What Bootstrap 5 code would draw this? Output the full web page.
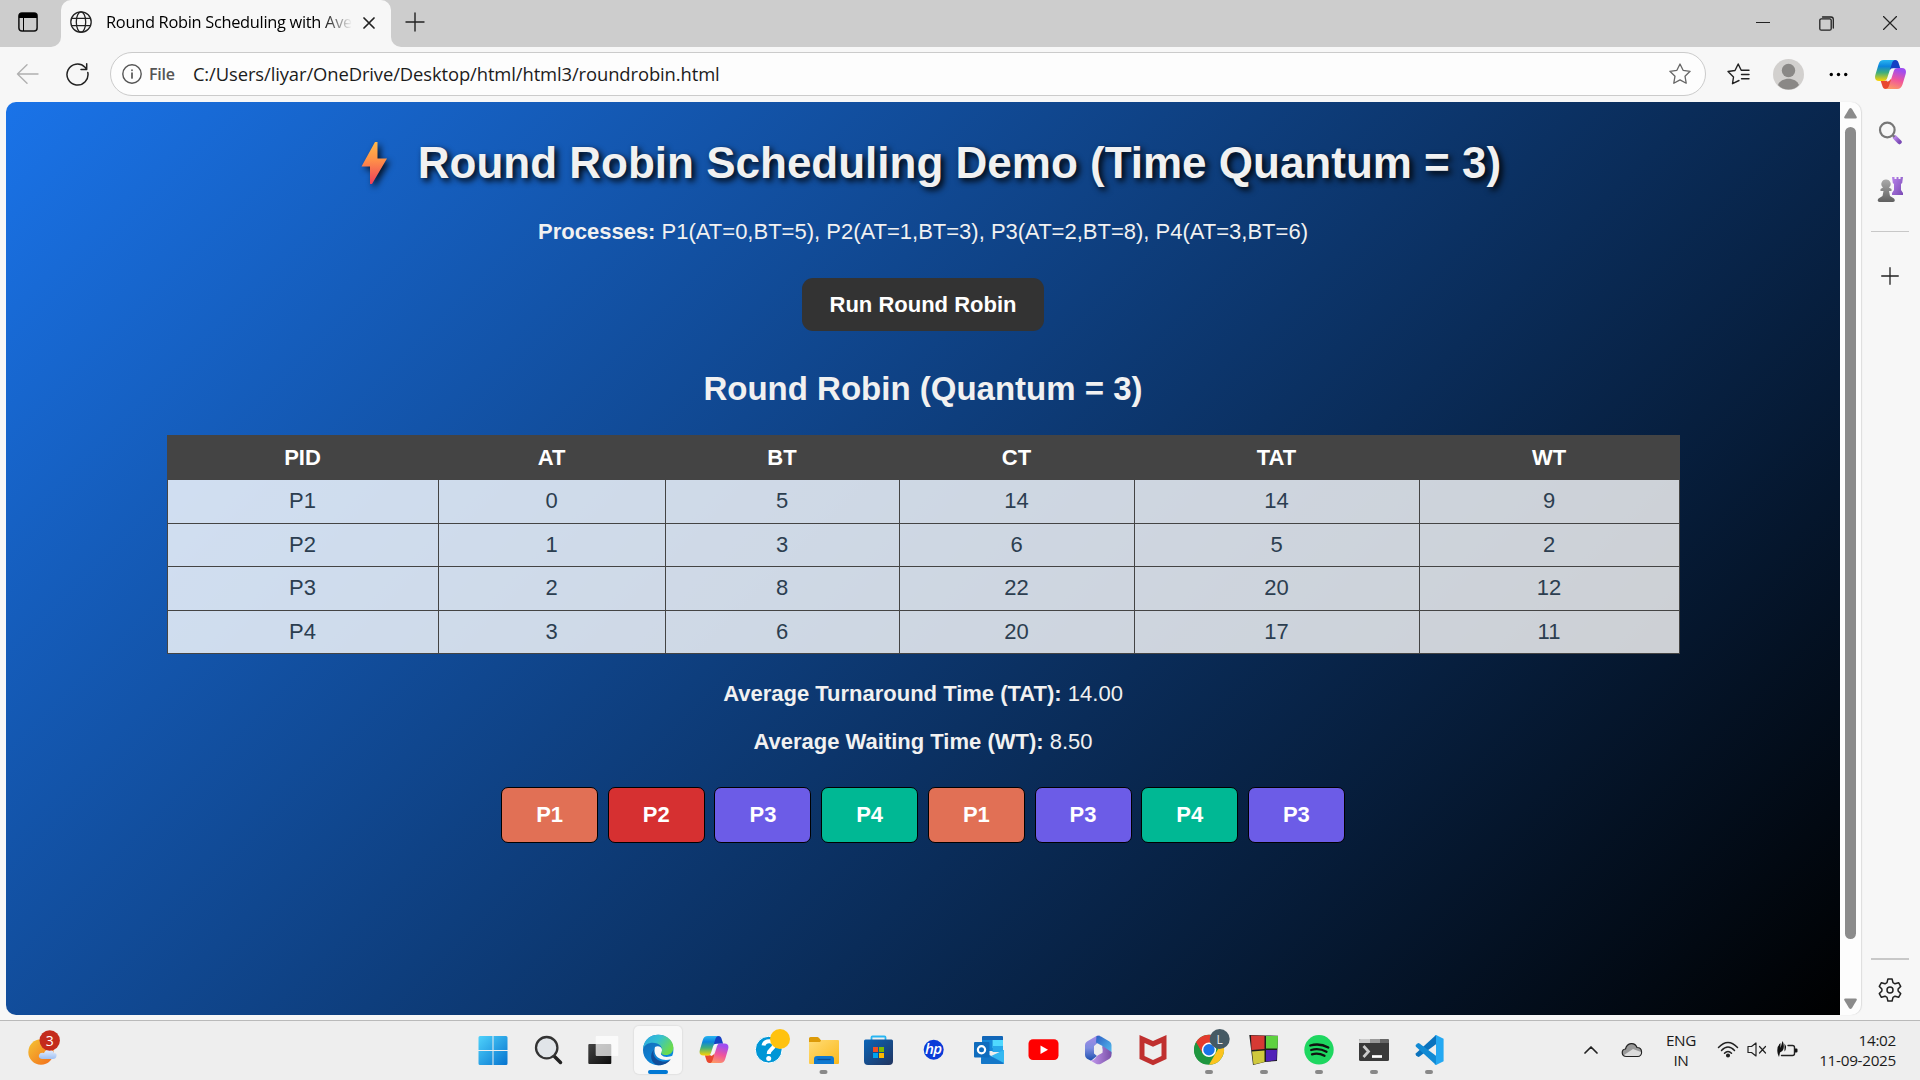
<!DOCTYPE html>
<html lang="en">
<head>
<meta charset="utf-8">
<title>Round Robin Scheduling with Average</title>
<link rel="stylesheet" href="https://cdn.jsdelivr.net/npm/bootstrap@5.3.0/dist/css/bootstrap.min.css">
<script src="https://cdn.jsdelivr.net/npm/bootstrap@5.3.0/dist/js/bootstrap.bundle.min.js"></script>
<style>
body{width:1920px;height:1080px;overflow:hidden;background:#f7f7f7;font-family:"Open Sans","Noto Sans",sans-serif;color:#1b1b1b}
svg{display:block;flex:none}
.ln{fill:none;stroke:#222;stroke-linecap:round;stroke-linejoin:round}
.tabstrip{height:47px;background:#cdcdcd}
.strip-l{width:61px;border-bottom-right-radius:10px;background:#cdcdcd;padding:0 0 3px 18px}
.strip-r{border-bottom-left-radius:10px;background:#cdcdcd;padding:0 0 4px 14px}
.strip-bg{background:#f7f7f7}
.tab-active{width:330px;background:#f7f7f7;border-radius:10px 10px 0 0;padding:0 0 3px 9px}
.tab-title{width:246px;margin-left:14px;font-size:16.4px;letter-spacing:-.3px;white-space:nowrap;color:#000;-webkit-mask-image:linear-gradient(90deg,#000 88%,transparent)}
.toolbar{height:55px;padding:0 0 1px 16px}
.omni{width:1596px;height:44px;margin-left:21px;border:1px solid #cbcbcb;border-radius:22px;background:#fdfdfd;padding:0 14px 0 11px}
.omni-kind{font-size:16px;font-weight:600;color:#555;margin-left:7px;letter-spacing:-.2px}
.omni-url{font-size:18.4px;margin-left:18px;letter-spacing:-.1px}
.middle{height:913px;padding-left:6px}
.page-view{width:1834px;border-radius:10px 0 0 10px;background:linear-gradient(135deg,#1a73e8,#000);font-family:Arial,"Liberation Sans",sans-serif;font-size:22px;color:#f1f1f1;line-height:26px}
.page-view h1{font-size:44px;font-weight:700;line-height:50px;padding:36px 0 0 16px;margin:0;text-shadow:3px 3px 6px #000;color:#f1f1f1;height:117px}
.bolt{margin:4px 31px 0 0;filter:drop-shadow(3px 3px 3px rgba(0,0,0,.8))}
.run-btn{width:242px;height:53px;margin-top:33px;border:0;border-radius:11px;background:#333;color:#fff;font-size:22px;font-weight:700;line-height:26px;padding:0}
.page-view h2{font-size:33px;font-weight:700;line-height:38px;margin:39px 0 27px;color:#f1f1f1}
.rr-table{width:1512px;table-layout:fixed;border-collapse:collapse;color:#2c3e50}
.rr-table td,.rr-table th{border:1px solid #444;text-align:center;padding:0;height:43.5px}
.rr-table td{background:rgba(255,255,255,.8)}
.rr-table th{background:#444;color:#fff;height:44px}
.avg{margin:0 0 22px}
.slots{gap:9.700px;margin-top:10px}
.slot{width:97px;height:56px;border:1px solid #000;border-radius:7px;color:#fff;font-weight:700}
.k1{background:#e17055}.k2{background:#d63031}.k3{background:#6c5ce7}.k4{background:#00b894}
.scroll-rail{width:21px;background:#fdfdfd;border-radius:0 10px 10px 0;box-shadow:1px 0 1px #ddd;padding:6px 5px 6px 5px}
.thumb{width:11px;height:812px;background:#8b8b8b;border-radius:6px;margin-top:8px}
.side-rail{width:59px;padding-right:2px}
.rule{width:38px;height:1px;background:#c8c8c8}
.taskbar{height:60px;margin-top:5px;background:#eee;border-top:1px solid #b9b9b9;padding-bottom:2px}
.weather{width:465px;padding:0 0 3px 27px}
.app-cell{width:55.08px}
.app-on{background:#f8f8f8;border-radius:5px;box-shadow:0 0 1px 1px #e2e2e2}
.tray{font-size:15.3px;line-height:20px;letter-spacing:-.3px}
</style>
</head>
<body>
<svg width="0" height="0" class="position-absolute">
<defs>
<linearGradient id="win" x1="0" y1="0" x2="1" y2="1"><stop stop-color="#4fd2fb"/><stop offset="1" stop-color="#0573cf"/></linearGradient>
<linearGradient id="cpA" x1="0" y1="0" x2="0" y2="1"><stop stop-color="#29b6f0"/><stop offset=".3" stop-color="#0b84dd"/><stop offset=".6" stop-color="#3fae7d"/><stop offset="1" stop-color="#ffd400"/></linearGradient>
<linearGradient id="cpB" x1=".3" y1="0" x2="0" y2="1"><stop stop-color="#a04df0"/><stop offset=".45" stop-color="#f0559c"/><stop offset="1" stop-color="#ffa45c"/></linearGradient>
<linearGradient id="boltG" x1="0" y1="0" x2="0" y2="1"><stop stop-color="#ffb84a"/><stop offset=".4" stop-color="#ff9448"/><stop offset="1" stop-color="#ee3f5a"/></linearGradient>
<linearGradient id="edA" x1="0" y1="0" x2="1" y2=".5"><stop stop-color="#2ba5e6"/><stop offset=".5" stop-color="#35c1d0"/><stop offset="1" stop-color="#6cdb4d"/></linearGradient>
<linearGradient id="edB" x1="0" y1="0" x2=".6" y2="1"><stop stop-color="#1667b0"/><stop offset="1" stop-color="#0a8ce2"/></linearGradient>
<linearGradient id="fold" x1="0" y1="0" x2="1" y2="1"><stop stop-color="#ffdc76"/><stop offset="1" stop-color="#fbb91c"/></linearGradient>
<linearGradient id="store" x1="0" y1="0" x2="1" y2="1"><stop stop-color="#0b65b8"/><stop offset="1" stop-color="#21345f"/></linearGradient>
<linearGradient id="dark" x1="0" y1="0" x2="1" y2="1"><stop stop-color="#444"/><stop offset="1" stop-color="#0d0d0d"/></linearGradient>
<linearGradient id="pur" x1="0" y1="0" x2="1" y2="1"><stop stop-color="#b783ea"/><stop offset="1" stop-color="#7b4bb5"/></linearGradient>
<linearGradient id="gry" x1="0" y1="0" x2="0" y2="1"><stop stop-color="#aaa"/><stop offset="1" stop-color="#606060"/></linearGradient>
<linearGradient id="sun" x1="0" y1="0" x2="1" y2="1"><stop stop-color="#f4c534"/><stop offset="1" stop-color="#f36a1a"/></linearGradient>
<linearGradient id="cld" x1="0" y1="0" x2="0" y2="1"><stop stop-color="#e8f1ff"/><stop offset="1" stop-color="#9fc0f2"/></linearGradient>
<linearGradient id="mA" x1="0" y1="0" x2="0" y2="1"><stop stop-color="#a78ae6"/><stop offset=".5" stop-color="#7d8ce0"/><stop offset="1" stop-color="#1b4fae"/></linearGradient>
<linearGradient id="mB" x1="0" y1="0" x2="1" y2="1"><stop stop-color="#2d5fc4"/><stop offset="1" stop-color="#55c0f0"/></linearGradient>
<linearGradient id="mC" x1="0" y1="0" x2="1" y2="0"><stop stop-color="#c59bf0"/><stop offset="1" stop-color="#7a50a8"/></linearGradient>
<symbol id="copilot" viewBox="0 0 30 28">
<path d="M14 0h5.500c2.300 0 3 1.500 3.600 3.600L24.500 8H18c-2 0-3 .8-3.500 2z" fill="#1440c4"/>
<path d="M16 28h-5.500c-2.300 0-3-1.500-3.600-3.600L5.500 20H12c2 0 3-.8 3.500-2z" fill="#e8482e"/>
<path d="M8.500 0H20c-2.200 0-3 1.300-3.700 3.500L12 17c-.9 2.700-1.800 3.300-4.300 3.300H4C.4 20.300-.6 17.700.4 14.300L3.300 4.500C4.300 1.300 5.600 0 8.500 0z" fill="url(#cpA)"/>
<path d="M21.500 28H10c2.200 0 3-1.300 3.700-3.500L18 11c.9-2.700 1.800-3.300 4.300-3.300H26c3.600 0 4.600 2.600 3.600 6l-2.900 9.800c-1 3.200-2.300 4.500-5.200 4.500z" fill="url(#cpB)"/>
<path d="M15.500 8.500h3.300c-1.500.5-1.900 1.300-2.300 2.700L14 19.500c-.4.800-1 1.200-2.500 1.200z" fill="#f7f7f7"/>
</symbol>
</defs>
</svg>

<div class="tabstrip d-flex">
  <div class="strip-bg"><div class="strip-l h-100 d-flex align-items-center">
    <svg width="20" height="20" viewBox="0 0 20 20"><rect x=".9" y=".9" width="18.200" height="18.200" rx="3" fill="none" stroke="#111" stroke-width="1.500"/><path d="M1 6V3.500C1 2 2 1 3.500 1h13C18 1 19 2 19 3.500V6zM5 6h1v13H5z"/></svg>
  </div></div>
  <div class="tab-active d-flex align-items-center">
    <svg class="ln" width="22" height="22" viewBox="0 0 22 22" stroke-width="1.300"><circle cx="11" cy="11" r="10.200"/><ellipse cx="11" cy="11" rx="4.700" ry="10.200"/><path d="M1.500 7.300h19M1.500 14.700h19"/></svg>
    <div class="tab-title">Round Robin Scheduling with Ave</div>
    <svg class="ln" style="margin:2px 0 0 11px" width="12" height="12" viewBox="0 0 12 12" stroke-width="1.700"><path d="M1 1l10 10M11 1L1 11"/></svg>
  </div>
  <div class="strip-bg flex-grow-1"><div class="strip-r h-100 d-flex align-items-center">
    <svg class="ln" width="20" height="20" viewBox="0 0 20 20" stroke-width="1.400"><path d="M10 1v18M1 10h18"/></svg>
    <div class="d-flex align-items-center ms-auto" style="margin-right:23px;padding-top:3px">
      <svg class="ln" width="14" height="14" viewBox="0 0 14 14" stroke-width="1.200"><path d="M0 6.500h14"/></svg>
      <svg class="ln" style="margin-left:49px" width="15" height="15" viewBox="0 0 15 15" stroke-width="1.300"><rect x=".8" y="2.800" width="11.400" height="11.400" rx="1.500"/><path d="M3.500 1H12c1.500 0 2.300.8 2.300 2.300V12"/></svg>
      <svg class="ln" style="margin-left:49px" width="14" height="14" viewBox="0 0 14 14" stroke-width="1.200"><path d="M.5.500l13 13M13.500.500l-13 13"/></svg>
    </div>
  </div></div>
</div>

<div class="toolbar d-flex align-items-center">
  <svg class="ln" style="stroke:#b0b0b0" width="23" height="20" viewBox="0 0 23 20" stroke-width="1.400"><path d="M22 10H1.500M11 .800L1.500 10l9.500 9.200"/></svg>
  <svg class="ln" style="margin-left:27px" width="23" height="23" viewBox="0 0 23 23" stroke-width="1.500"><path d="M21.800 9.500A10.500 10.500 0 1 1 19 4.200L20.500 6M20.700 .800V6.500H15"/></svg>
  <div class="omni d-flex align-items-center">
    <svg class="ln" style="stroke:#555" width="20" height="20" viewBox="0 0 20 20" stroke-width="1.400"><circle cx="10" cy="10" r="9.200"/><path d="M10 9v5M10 6.200v.1" stroke-width="1.700"/></svg>
    <span class="omni-kind">File</span>
    <span class="omni-url">C:/Users/liyar/OneDrive/Desktop/html/html3/roundrobin.html</span>
    <svg class="ln ms-auto" style="stroke:#666" width="22" height="22" viewBox="0 0 22 22" stroke-width="1.300"><path d="M11 1l3.100 6.300 7 1-5.100 4.900 1.200 7L11 16.900l-6.200 3.300 1.200-7L.9 8.300l7-1z"/></svg>
  </div>
  <svg class="ln" style="margin-left:21px" width="23" height="22" viewBox="0 0 23 22" stroke-width="1.400"><path d="M12 17.500l-6.500 3.200L6.500 14 1 8.500l7-1L11.200 1l3 6.200H22M14.500 11.500H22M14.500 15.800H22"/></svg>
  <svg style="margin-left:23px" width="31" height="31" viewBox="0 0 31 31"><circle cx="15.500" cy="15.500" r="15.500" fill="#d2d0ce"/><circle cx="15.500" cy="11.500" r="6.700" fill="#8a8886"/><path d="M5 26c3-8.500 18-8.500 21 0-5 6-16 6-21 0z" fill="#8a8886"/></svg>
  <svg style="margin-left:25px" width="19" height="5" viewBox="0 0 19 5"><circle cx="2.300" cy="2.500" r="1.700"/><circle cx="9.500" cy="2.500" r="1.700"/><circle cx="16.700" cy="2.500" r="1.700"/></svg>
  <svg style="margin-left:27px" width="31" height="29"><use href="#copilot"/></svg>
</div>

<div class="middle d-flex">
  <main class="page-view text-center d-flex flex-column align-items-center">
    <h1 class="d-flex align-items-start justify-content-center">
      <svg class="bolt" width="26" height="42" viewBox="0 0 26 42"><path d="M14 0h2.500v16.500H26L11 42H9V24.500H.500z" fill="url(#boltG)"/></svg>
      <span>Round Robin Scheduling Demo (Time Quantum = 3)</span>
    </h1>
    <p class="m-0"><b>Processes:</b> P1(AT=0,BT=5), P2(AT=1,BT=3), P3(AT=2,BT=8), P4(AT=3,BT=6)</p>
    <button class="run-btn">Run Round Robin</button>
    <h2>Round Robin (Quantum = 3)</h2>
    <table class="rr-table">
      <colgroup><col style="width:271px"><col style="width:227px"><col style="width:234px"><col style="width:235px"><col style="width:285px"><col style="width:260px"></colgroup>
      <tr><th>PID</th><th>AT</th><th>BT</th><th>CT</th><th>TAT</th><th>WT</th></tr>
      <tr><td>P1</td><td>0</td><td>5</td><td>14</td><td>14</td><td>9</td></tr>
      <tr><td>P2</td><td>1</td><td>3</td><td>6</td><td>5</td><td>2</td></tr>
      <tr><td>P3</td><td>2</td><td>8</td><td>22</td><td>20</td><td>12</td></tr>
      <tr><td>P4</td><td>3</td><td>6</td><td>20</td><td>17</td><td>11</td></tr>
    </table>
    <p class="avg" style="margin-top:27px"><b>Average Turnaround Time (TAT):</b> 14.00</p>
    <p class="avg"><b>Average Waiting Time (WT):</b> 8.50</p>
    <div class="slots d-flex">
      <div class="slot k1 d-flex align-items-center justify-content-center">P1</div>
      <div class="slot k2 d-flex align-items-center justify-content-center">P2</div>
      <div class="slot k3 d-flex align-items-center justify-content-center">P3</div>
      <div class="slot k4 d-flex align-items-center justify-content-center">P4</div>
      <div class="slot k1 d-flex align-items-center justify-content-center">P1</div>
      <div class="slot k3 d-flex align-items-center justify-content-center">P3</div>
      <div class="slot k4 d-flex align-items-center justify-content-center">P4</div>
      <div class="slot k3 d-flex align-items-center justify-content-center">P3</div>
    </div>
  </main>
  <div class="scroll-rail d-flex flex-column align-items-center">
    <svg width="13" height="11" viewBox="0 0 13 11"><path d="M5 1Q6.500-.800 8 1l4.500 7.500q1 2-1 2h-10q-2 0-1-2z" fill="#8b8b8b"/></svg>
    <div class="thumb"></div>
    <svg class="mt-auto" width="13" height="11" viewBox="0 0 13 11"><path d="M5 10q1.500 1.800 3 0l4.500-7.500q1-2-1-2h-10q-2 0-1 2z" fill="#8b8b8b"/></svg>
  </div>
  <aside class="side-rail d-flex flex-column align-items-center">
    <svg style="margin-top:19px" width="24" height="24" viewBox="0 0 24 24"><circle cx="9.300" cy="9" r="7.300" fill="none" stroke="#777" stroke-width="2.200"/><path d="M17 16.500l4.500 4.500" stroke="url(#pur)" stroke-width="4.500" stroke-linecap="round"/><path d="M14.500 14l2 2" stroke="#777" stroke-width="2.200"/></svg>
    <svg style="margin-top:31px" width="26" height="26" viewBox="0 0 26 26"><path d="M15 1h2.500v2h2V1h2v2h2V1H26l-.8 6-1.200 1v6l2 3v2H15v-2l2-3V8l-1.200-1z" fill="url(#pur)"/><path d="M9 3.500a4.500 4.500 0 0 1 3 8l2.500 1.500v2H12l1 5 4 2.500q2 3-1 3.500H2.500q-3-.5-1-3.500l4-2.500 1-5H3.500v-2L6 11.500a4.500 4.500 0 0 1 3-8z" fill="url(#gry)"/></svg>
    <div class="rule" style="margin-top:29px"></div>
    <svg class="ln" style="margin-top:35px" width="18" height="18" viewBox="0 0 18 18" stroke-width="1.300"><path d="M9 .700v16.600M.700 9h16.600"/></svg>
    <div class="rule mt-auto" style="height:2px"></div>
    <svg class="ln" style="margin:18px 0 13px" width="24" height="24" viewBox="0 0 24 24" stroke-width="1.500"><circle cx="12" cy="12" r="3"/><path d="M9.900 1h4.200l.9 3.600 2 1.200 3.600-1.100 2.100 3.700-2.600 2.600v2l2.600 2.600-2.100 3.700-3.600-1.100-2 1.200-.9 3.600H9.900L9 19.400l-2-1.200-3.600 1.100-2.100-3.700L3.900 13v-2L1.300 8.400l2.100-3.700L7 5.800l2-1.200z"/></svg>
  </aside>
</div>

<footer class="taskbar d-flex align-items-center">
  <div class="weather">
    <svg width="36" height="36" viewBox="0 0 36 36"><circle cx="14" cy="22" r="12.700" fill="url(#sun)"/><path d="M15 29q-4-1-3-4 1-3 5-2 2-5 7-3 3 1 3 3 3 0 2.500 3T26 29z" fill="url(#cld)"/><circle cx="22.700" cy="10.500" r="10.200" fill="#c42b1c"/><text x="22.700" y="15.500" text-anchor="middle" font-size="14" fill="#fff">3</text></svg>
  </div>
  <div class="d-flex">
    <div class="app-cell d-flex justify-content-center"><svg width="48" height="48" viewBox="0 0 48 48"><path d="M11 10h12.500v14H9.500V11.500Q9.500 10 11 10zM24.500 10H37q1.500 0 1.500 1.500V24h-14zM9.500 25h14v14H11q-1.500 0-1.500-1.500zM24.500 25h14v12.500q0 1.500-1.500 1.500H24.500z" fill="url(#win)"/></svg></div>
    <div class="app-cell d-flex justify-content-center"><svg width="48" height="48" viewBox="0 0 48 48"><path d="M30.500 30.500l6 6" stroke="#222" stroke-width="3.500" stroke-linecap="round"/><circle cx="22.700" cy="21.700" r="10.700" fill="#e1e5e9" stroke="#333" stroke-width="2.300"/></svg></div>
    <div class="app-cell d-flex justify-content-center"><svg width="48" height="48" viewBox="0 0 48 48"><rect x="9.300" y="18" width="23" height="20" rx="1" fill="url(#dark)"/><rect x="16.700" y="10" width="22.600" height="20" rx="1" fill="#fff" opacity=".72"/></svg></div>
    <div class="app-cell d-flex justify-content-center"><svg class="app-on" width="48" height="48" viewBox="0 0 48 48"><circle cx="24.200" cy="24" r="15.200" fill="url(#edB)"/><path d="M9 23C10 13 17 8.800 24.200 8.800c9 0 15.200 6.200 15.200 12.700 0 5-3.500 7.500-7.500 7.500-3.500 0-5.700-1.500-4.700-3 2-3 0-7-4-8.500C18 15.500 11 17 9 23z" fill="url(#edA)"/><path d="M20.500 23c-3 4 0 11.500 8 12.500 3 .3 6-.5 8.500-2.500-3 4.500-8 6.500-13 6.200-7-1-9.500-11-3.500-16.200z" fill="#124d98"/><path d="M21 21c3-2 7 0 7 3 0 2-2 3.500-.5 5 2 2.500 7 2.500 12 .5v2.500L37 33c-6 2.500-14 0-15.800-5-1-3-.7-5-.2-7z" fill="#f8f8f8"/><rect x="14" y="44" width="20" height="4" rx="2" fill="#0078d4"/></svg></div>
    <div class="app-cell d-flex justify-content-center"><svg width="48" height="48" viewBox="0 0 48 48"><use href="#copilot" x="10" y="10" width="30" height="27"/></svg></div>
    <div class="app-cell d-flex justify-content-center"><svg width="48" height="48" viewBox="0 0 48 48"><circle cx="24.700" cy="23.700" r="13.400" fill="#0096d6" stroke="#fff" stroke-width="1"/><path d="M19.500 19.500c1-6 11-5.500 10.500 0-.3 3.500-5.300 4-5.300 8.500" fill="none" stroke="#fff" stroke-width="4"/><circle cx="24.700" cy="32.500" r="2.500" fill="#fff"/><circle cx="36" cy="13" r="10" fill="#ffc20e"/></svg></div>
    <div class="app-cell d-flex justify-content-center"><svg width="48" height="48" viewBox="0 0 48 48"><path d="M10 12.500Q10 11 11.500 11h7q1 0 2 1.500l2 2.500v4H10z" fill="#dc9a08"/><path d="M10 16h11l1.500-2H39q1 0 1 1v22q0 1-1 1H11q-1 0-1-1z" fill="url(#fold)"/><path d="M15 38v-5q0-3 3-3h14q3 0 3 3v5z" fill="#0f78d0"/><path d="M18.500 33.500h13" stroke="#0a4f96" stroke-width="1.300"/><rect x="20.500" y="44" width="8" height="4" rx="2" fill="#888"/></svg></div>
    <div class="app-cell d-flex justify-content-center"><svg width="48" height="48" viewBox="0 0 48 48"><path d="M17.500 15v-3.500q0-1 1-1h12q1 0 1 1V15" fill="none" stroke="#27b5f2" stroke-width="1.800"/><path d="M10 15q0-1.500 1.500-1.500h26q1.500 0 1.500 1.500v20q0 4-4 4H14q-4 0-4-4z" fill="url(#store)"/><path d="M19 21h5v5h-5z" fill="#f25022"/><path d="M25 21h5v5h-5z" fill="#7fba00"/><path d="M19 27h5v5h-5z" fill="#00a4ef"/><path d="M25 27h5v5h-5z" fill="#ffb900"/></svg></div>
    <div class="app-cell d-flex justify-content-center"><svg width="48" height="48" viewBox="0 0 48 48"><circle cx="24.700" cy="23.700" r="10" fill="#0a3bd8"/><text x="24.300" y="28" text-anchor="middle" font-size="15" font-style="italic" font-weight="600" letter-spacing="-.6" fill="#fff">hp</text></svg></div>
    <div class="app-cell d-flex justify-content-center"><svg width="48" height="48" viewBox="0 0 48 48"><path d="M18 11q0-1 1-1h19q1 0 1 1v14H18z" fill="#1066b8"/><path d="M18 14h10.500v11H18z" fill="#1588da"/><path d="M28.500 14H39v8H28.500z" fill="#50d9ff"/><path d="M28.500 20H39v6H28.500z" fill="#28a8ea"/><path d="M17 24l12 7 11-7v12.500q0 1.500-1.500 1.500h-20q-1.500 0-1.500-1.500z" fill="#1b88d8"/><path d="M40 24v13L27 30z" fill="#35b8f1"/><path d="M40 37.500L24 29l-7 4v4q0 1 1.500 1H39z" fill="#1477c8"/><rect x="10" y="16" width="15.500" height="15.500" rx="1" fill="#0f6cbd"/><circle cx="17.500" cy="23.700" r="3.600" fill="none" stroke="#fff" stroke-width="2.200"/></svg></div>
    <div class="app-cell d-flex justify-content-center"><svg width="48" height="48" viewBox="0 0 48 48"><rect x="9.500" y="13.300" width="30" height="20.700" rx="4.500" fill="#f00"/><path d="M21.500 19.500v8.600l7.500-4.300z" fill="#fff"/></svg></div>
    <div class="app-cell d-flex justify-content-center"><svg width="48" height="48" viewBox="0 0 48 48"><path d="M21.500 10.500L13 15.500q-2 1.200-2 3.500v10q0 2.500 2 3.700l4 2 6-4.700-3-2.500V20l6-5V9.500q-2-.5-4.500 1z" fill="url(#mA)"/><path d="M22.500 10q2-.8 4.500.5l8.500 5q2 1.200 2 3.500v9l-9-4v-4l-6.500-3.500z" fill="url(#mB)"/><path d="M37.500 26v3q0 2.500-2 3.700l-8.500 5q-2.500 1.300-5 0l-6-3.500c5 1 6-4 8-5l4.500-2.500V20z" fill="url(#mC)"/><circle cx="24.200" cy="23.700" r="4.300" fill="#eee"/></svg></div>
    <div class="app-cell d-flex justify-content-center"><svg width="48" height="48" viewBox="0 0 48 48"><path d="M10.500 9L24 15l13.500-6v24L24 39.200 10.500 33zm5 8v13l8.500 4 8.500-4V17L24 20.700z" fill="#c0302f" fill-rule="evenodd"/></svg></div>
    <div class="app-cell d-flex justify-content-center"><svg width="48" height="48" viewBox="0 0 48 48"><circle cx="24" cy="23.800" r="15" fill="#1e963f"/><path d="M11 16.300A15 15 0 0 1 37 16.300H24v15z" fill="#e33b2e"/><path d="M37 16.300a15 15 0 0 1-13 22.500l6.500-11.300z" fill="#fcc31e"/><path d="M11 16.300l6.500 11.200L24 23.800l1-7.500z" fill="#e33b2e"/><path d="M11 16.300l6.500 11.200q3 4 6.500 3.800L20 38.300A15 15 0 0 1 11 16.300z" fill="#1e963f"/><circle cx="24" cy="23.800" r="7.200" fill="#fff"/><circle cx="24" cy="23.800" r="5.700" fill="#1a73e8"/><circle cx="34.700" cy="13" r="10" fill="#455a64"/><text x="34.700" y="17.500" text-anchor="middle" font-size="12" fill="#e4e8ea">L</text><rect x="20" y="44" width="8" height="4" rx="2" fill="#888"/></svg></div>
    <div class="app-cell d-flex justify-content-center"><svg width="48" height="48" viewBox="0 0 48 48"><path d="M9.300 9L25 9.500 38 9.700 37 35l-12 1-12 3z" fill="#1c1c1c"/><path d="M11 9.500l13.500.3V23L11.500 24z" fill="#d63a34"/><path d="M26 10h12l-.5 12.500H26z" fill="#5ed13f"/><path d="M12 25.500l12.500-1V36L13.500 38.500z" fill="#cfc83d"/><path d="M26 24h11l-.5 10L26 35.500z" fill="#5121b8"/><rect x="20" y="44" width="8" height="4" rx="2" fill="#888"/></svg></div>
    <div class="app-cell d-flex justify-content-center"><svg width="48" height="48" viewBox="0 0 48 48"><circle cx="24" cy="23.800" r="14.700" fill="#1ed760"/><path d="M15.300 19.500q9.500-2.700 18 2M16.200 24q8-2.200 15.300 1.800M17 28.300q6.500-1.700 12.500 1.500" fill="none" stroke="#111" stroke-width="2.300" stroke-linecap="round"/><rect x="20" y="44" width="8" height="4" rx="2" fill="#888"/></svg></div>
    <div class="app-cell d-flex justify-content-center"><svg width="48" height="48" viewBox="0 0 48 48"><rect x="9" y="13" width="30" height="22" rx="1.500" fill="#3a3a3a"/><path d="M9 17v-2.500Q9 13 10.500 13H20v4z" fill="#ccc"/><path d="M20 13h10v4H20z" fill="#999"/><path d="M30 13h7.500q1.500 0 1.500 1.500V17h-9z" fill="#666"/><path d="M13.500 20l5 5.500-5 5.500" fill="none" stroke="#ccc" stroke-width="2.700"/><path d="M22 30.500h10" stroke="#fff" stroke-width="2.700"/><rect x="20" y="44" width="8" height="4" rx="2" fill="#888"/></svg></div>
    <div class="app-cell d-flex justify-content-center"><svg width="48" height="48" viewBox="0 0 48 48"><path d="M31 9l-20 18.300q-1 1 0 2l1.500 1.300q1 .7 2 0L34 16z" fill="#0a72bd"/><path d="M31 39L11 20.700q-1-1 0-2l1.500-1.300q1-.7 2 0L34 32z" fill="#118ad4"/><path d="M31 9l7.600 3.700v22.600L31 39q-1 .3-1.500-.5 1.500.5 1.500-1.500V11q0-2-1.500-1.500Q30 8.700 31 9z" fill="#24a8f2"/><rect x="20" y="44" width="8" height="4" rx="2" fill="#888"/></svg></div>
  </div>
  <div class="tray d-flex align-items-center ms-auto" style="margin-right:24px">
    <svg class="ln" width="14" height="8" viewBox="0 0 14 8" stroke-width="1.700"><path d="M1 7l6-6 6 6"/></svg>
    <svg style="margin-left:23px" width="22" height="16" viewBox="0 0 22 16"><path d="M5.500 14.500C0 14.500 0 7.500 4.500 7 6 0 14 0 16 5.500c6 0 6 9 .5 9z" fill="#999" stroke="#222" stroke-width="1.200"/><path d="M3 13l9-6 8 3q0 4-4 4H5z" fill="#dcdcdc"/></svg>
    <div class="text-center" style="margin-left:22px;width:32px">ENG<br>IN</div>
    <svg class="ln" style="margin-left:20px" width="22" height="17" viewBox="0 0 22 17" stroke-width="1.500"><path d="M1.500 6.500q9.500-10 19 0M4.500 9.500q6.500-7 13 0M7.500 12.300q3.500-3.700 7 0"/><circle cx="11" cy="14.500" r="1.300" fill="#222"/></svg>
    <svg class="ln" style="margin-left:8px" width="20" height="15" viewBox="0 0 20 15" stroke-width="1.200"><path d="M1 4.500h3.500L9 1v13l-4.500-3.500H1zM12.500 4.500l6 6.500M18.500 4.500l-6 6.500"/></svg>
    <svg style="margin-left:10px" width="21" height="19" viewBox="0 0 21 19"><path class="ln" d="M11 5.500h4.500q2 0 2 2v6q0 2-2 2h-11" stroke-width="1.400"/><path d="M18 8.500h1.500q1 0 1 1v2q0 1-1 1H18zM.8 14Q-1 7 3.500 3v5L5.500 1q2 3 1 8-1 3-3.500 3.500L2 17zM7.500 3.500q3 4 0 8z" fill="#111"/></svg>
    <div class="text-end" style="margin-left:19px;width:79px;white-space:nowrap">14:02<br>11-09-2025</div>
  </div>
</footer>
</body>
</html>
